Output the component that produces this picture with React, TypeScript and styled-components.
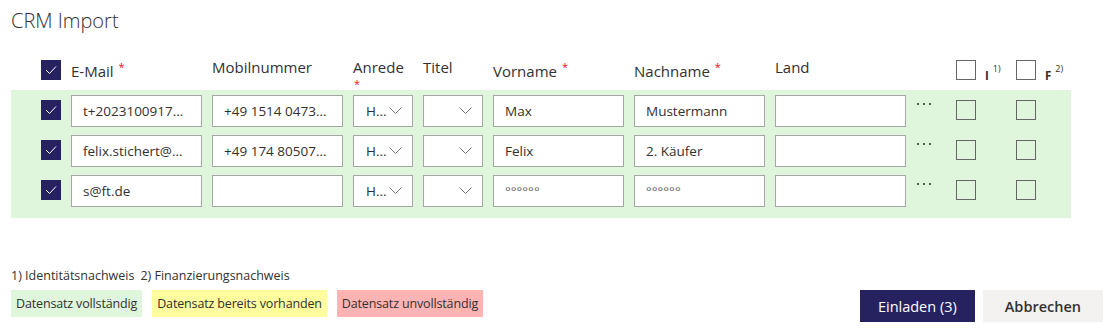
import * as React from 'react';
import styled, { createGlobalStyle } from 'styled-components';

const GlobalStyle = createGlobalStyle`
  body {
    margin: 0;
    font-family: "Open Sans", "Noto Sans", sans-serif;
    color: #323130;
    background: #fff;
  }
`;

const COLS = '20px 131px 131px 60px 60px 131px 131px 131px 30px 50px 50px';

const Page = styled.div`
  width: 1112px;
  height: 330px;
  box-sizing: border-box;
  padding: 8px 9px 8px 11px;
  display: flex;
  flex-direction: column;
`;

const Title = styled.h1`
  margin: 0;
  font-size: 20px;
  font-weight: 300;
  line-height: 26px;
  color: #323130;
`;

const HeaderRow = styled.div`
  display: grid;
  grid-template-columns: ${COLS};
  column-gap: 10px;
  padding-left: 30px;
  margin-top: 24px;
  height: 32px;
  align-items: start;
`;

const HeadLabel = styled.div<{ $low?: boolean }>`
  font-size: 15px;
  line-height: 18px;
  padding-top: ${(p) => (p.$low ? '4px' : '0')};
  white-space: nowrap;
  position: relative;
`;

const Star = styled.span<{ $below?: boolean }>`
  color: #e81123;
  font-size: 11px;
  position: ${(p) => (p.$below ? 'absolute' : 'relative')};
  left: ${(p) => (p.$below ? '1px' : '5px')};
  top: ${(p) => (p.$below ? '17px' : '-6px')};
`;

const Band = styled.div`
  align-self: flex-start;
  background: #dff6dd;
  padding: 5px 5px 3px 30px;
`;

const Row = styled.div`
  display: grid;
  grid-template-columns: ${COLS};
  column-gap: 10px;
  height: 40px;
  align-items: start;
`;

const Box = styled.div<{ $checked?: boolean }>`
  width: 20px;
  height: 20px;
  box-sizing: border-box;
  margin-top: 5px;
  border: 1px solid ${(p) => (p.$checked ? '#25225f' : '#666')};
  background: ${(p) => (p.$checked ? '#25225f' : 'transparent')};
  display: flex;
  align-items: center;
  justify-content: center;
`;

const HeadBox = styled(Box)`
  margin-top: 2px;
  background: ${(p) => (p.$checked ? '#25225f' : '#fff')};
`;

const Field = styled.div<{ $dim?: boolean }>`
  height: 32px;
  box-sizing: border-box;
  border: 1px solid #a6a6a6;
  background: #fff;
  padding: 0 11px;
  font-size: 13.5px;
  line-height: 30px;
  color: ${(p) => (p.$dim ? '#666' : '#323130')};
  white-space: nowrap;
  overflow: hidden;
  text-overflow: ellipsis;
`;

const Select = styled(Field)`
  display: flex;
  align-items: center;
  justify-content: space-between;
  padding: 0 10px 0 12px;
  overflow: visible;
`;

const Dots = styled.div`
  display: flex;
  gap: 4px;
  margin-top: 8px;
  padding-left: 1px;
  span {
    width: 2px;
    height: 2px;
    background: #555;
  }
`;

const FlagHead = styled.div`
  display: flex;
  align-items: flex-end;
  gap: 9px;
  height: 22px;
`;

const FlagLetter = styled.span`
  font-size: 11.5px;
  font-weight: 700;
  line-height: 11px;
  margin-bottom: -1px;
  sup {
    font-weight: 400;
    font-size: 9px;
    margin-left: 4px;
    position: relative;
    top: -3px;
  }
`;

const Footer = styled.div`
  margin-top: auto;
  display: flex;
  justify-content: space-between;
  align-items: flex-end;
`;

const Notes = styled.div`
  font-size: 12.5px;
  line-height: 18px;
  margin-bottom: 5px;
  span + span {
    margin-left: 6px;
  }
`;

const Legend = styled.div`
  display: flex;
  gap: 10px;
  margin-bottom: 5px;
`;

const Chip = styled.div<{ $bg: string }>`
  background: ${(p) => p.$bg};
  height: 27px;
  line-height: 27px;
  padding: 0 5px;
  font-size: 12.5px;
  letter-spacing: -0.15px;
  color: #323130;
`;

const Buttons = styled.div`
  display: flex;
  gap: 8px;
`;

const Button = styled.button<{ $primary?: boolean }>`
  height: 32px;
  border: none;
  padding: 0 ${(p) => (p.$primary ? '18px' : '22px')};
  font-family: inherit;
  font-size: 14.5px;
  font-weight: ${(p) => (p.$primary ? 400 : 600)};
  background: ${(p) => (p.$primary ? '#25225f' : '#f3f2f1')};
  color: ${(p) => (p.$primary ? '#fff' : '#323130')};
`;

const Check = () => (
  <svg width="12" height="10" viewBox="0 0 12 10">
    <polyline points="1,5 4.5,8.5 11,1.5" fill="none" stroke="#fff" strokeWidth="1" />
  </svg>
);

const Chevron = () => (
  <svg width="13" height="8" viewBox="0 0 13 8">
    <polyline points="0.5,0.5 6.5,6.5 12.5,0.5" fill="none" stroke="#777" strokeWidth="1" />
  </svg>
);

interface IRow {
  email: string;
  phone: string;
  first: string;
  last: string;
  masked?: boolean;
}

const rows: IRow[] = [
  { email: 't+2023100917…', phone: '+49 1514 0473…', first: 'Max', last: 'Mustermann' },
  { email: 'felix.stichert@…', phone: '+49 174 80507…', first: 'Felix', last: '2. Käufer' },
  { email: 's@ft.de', phone: '', first: '°°°°°°', last: '°°°°°°', masked: true },
];

const App = () => {
  return (
    <Page>
      <GlobalStyle />
      <Title>CRM Import</Title>
      <HeaderRow>
        <HeadBox $checked><Check /></HeadBox>
        <HeadLabel $low>E-Mail<Star>*</Star></HeadLabel>
        <HeadLabel>Mobilnummer</HeadLabel>
        <HeadLabel>Anrede<Star $below>*</Star></HeadLabel>
        <HeadLabel>Titel</HeadLabel>
        <HeadLabel $low>Vorname<Star>*</Star></HeadLabel>
        <HeadLabel $low>Nachname<Star>*</Star></HeadLabel>
        <HeadLabel>Land</HeadLabel>
        <div />
        <FlagHead><HeadBox /><FlagLetter>I<sup>1)</sup></FlagLetter></FlagHead>
        <FlagHead><HeadBox /><FlagLetter>F<sup>2)</sup></FlagLetter></FlagHead>
      </HeaderRow>
      <Band>
        {rows.map((r, i) => (
          <Row key={i}>
            <Box $checked><Check /></Box>
            <Field>{r.email}</Field>
            <Field>{r.phone}</Field>
            <Select>H...<Chevron /></Select>
            <Select><span /><Chevron /></Select>
            <Field $dim={r.masked}>{r.first}</Field>
            <Field $dim={r.masked}>{r.last}</Field>
            <Field />
            <Dots><span /><span /><span /></Dots>
            <Box />
            <Box />
          </Row>
        ))}
      </Band>
      <Footer>
        <div>
          <Notes><span>1) Identitätsnachweis</span><span>2) Finanzierungsnachweis</span></Notes>
          <Legend>
            <Chip $bg="#dff6dd">Datensatz vollständig</Chip>
            <Chip $bg="#fffd9e">Datensatz bereits vorhanden</Chip>
            <Chip $bg="#ffb3b3">Datensatz unvollständig</Chip>
          </Legend>
        </div>
        <Buttons>
          <Button $primary>Einladen (3)</Button>
          <Button>Abbrechen</Button>
        </Buttons>
      </Footer>
    </Page>
  );
};

export default App;
